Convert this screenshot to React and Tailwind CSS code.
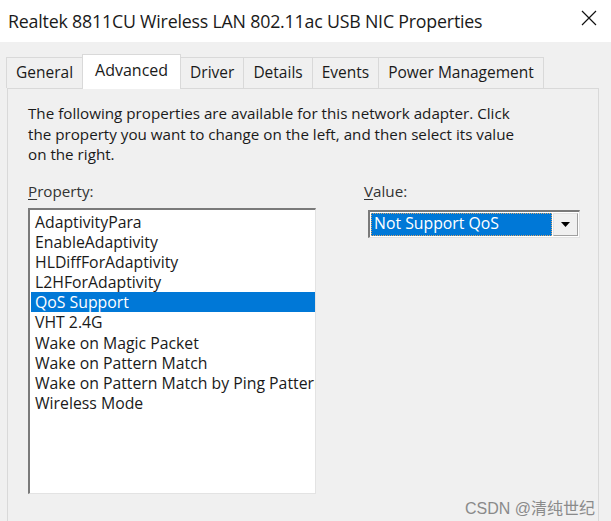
import React from 'react';

const items = [
  'AdaptivityPara',
  'EnableAdaptivity',
  'HLDiffForAdaptivity',
  'L2HForAdaptivity',
  'QoS Support',
  'VHT 2.4G',
  'Wake on Magic Packet',
  'Wake on Pattern Match',
  'Wake on Pattern Match by Ping Pattern',
  'Wireless Mode',
];

const tabs = ['General', 'Advanced', 'Driver', 'Details', 'Events', 'Power Management'];

const App = () => {
  return (
    <div
      className="w-[611px] h-[521px] overflow-hidden bg-[#f0f0f0] text-[#1a1a1a]"
      style={{ fontFamily: '"Open Sans", "Noto Sans", sans-serif' }}
    >
      {/* Title bar */}
      <div className="h-[42px] bg-white flex items-center justify-between pl-[8px] pr-[14px]">
        <span className="text-[17.8px] tracking-[-0.2px]">
          Realtek 8811CU Wireless LAN 802.11ac USB NIC Properties
        </span>
        <svg width="16" height="16" viewBox="0 0 16 16" className="mt-[-6px]">
          <path d="M1 1 L15 15 M15 1 L1 15" stroke="#111" strokeWidth="1.2" />
        </svg>
      </div>

      {/* Tabs */}
      <div className="pl-[7px] pt-[11px] flex items-end h-[46px]">
        {tabs.map((t) => {
          const active = t === 'Advanced';
          return (
            <div
              key={t}
              className={
                active
                  ? 'h-[35px] px-[12px] bg-white border border-b-0 border-[#d9d9d9] flex items-start pt-[3px] text-[16px] relative top-[1px] z-10 -ml-px'
                  : 'h-[31px] px-[9px] bg-[#f0f0f0] border border-b-0 border-[#d9d9d9] -ml-px flex items-center text-[15.5px]'
              }
            >
              {t}
            </div>
          );
        })}
      </div>

      {/* Tab page */}
      <div className="ml-[7px] w-[592px] h-[450px] border border-[#d9d9d9] bg-[#f0f0f0] pl-[20px] pt-[14px] text-[15.2px]">
        <p className="leading-[20.5px] w-[500px]">
          The following properties are available for this network adapter. Click
          the property you want to change on the left, and then select its value
          on the right.
        </p>

        <div className="flex mt-[16px]">
          <div className="w-[288px]">
            <div className="leading-[20px] text-[#333]">
              <span className="underline underline-offset-2">P</span>roperty:
            </div>
            <div className="mt-[7px] h-[286px] bg-white border-t-2 border-l-2 border-t-[#7a7a7a] border-l-[#7a7a7a] border-r border-b border-r-[#e3e3e3] border-b-[#e3e3e3] pt-[2px] pl-[1px] overflow-hidden text-[15.8px]">
              {items.map((it) => {
                const sel = it === 'QoS Support';
                return (
                  <div
                    key={it}
                    className={
                      'h-[20.2px] leading-[20px] pl-[4px] whitespace-nowrap ' +
                      (sel ? 'bg-[#0078d7] text-white' : '')
                    }
                  >
                    {it}
                  </div>
                );
              })}
            </div>
          </div>

          <div className="ml-[48px]">
            <div className="leading-[20px] text-[#333]">
              <span className="underline underline-offset-2">V</span>alue:
            </div>
            <div className="mt-[9px] ml-[4px] w-[212px] h-[28px] bg-white border-t-2 border-l-2 border-t-[#7a7a7a] border-l-[#7a7a7a] border-r border-b border-r-[#e3e3e3] border-b-[#e3e3e3] flex items-stretch p-[1px]">
              <div className="flex-1 bg-[#0078d7] text-white border border-dotted border-[#d9a46a] flex items-center pl-[2px] leading-none text-[15.8px]">
                Not Support QoS
              </div>
              <div className="w-[25px] bg-[#f0f0f0] border border-[#e3e3e3] border-r-[#a0a0a0] border-b-[#a0a0a0] flex items-center justify-center ml-[1px]">
                <svg width="9" height="5" viewBox="0 0 9 5">
                  <path d="M0 0 L9 0 L4.5 5 Z" fill="#000" />
                </svg>
              </div>
            </div>
          </div>
        </div>

        <div className="flex justify-end pr-[3px] mt-[3px]">
          <span
            className="text-[16px] text-[#8a8a8a]"
            style={{ fontFamily: '"Liberation Sans", "Noto Sans CJK SC", sans-serif' }}
          >
            CSDN @清纯世纪
          </span>
        </div>
      </div>
    </div>
  );
};

export default App;
